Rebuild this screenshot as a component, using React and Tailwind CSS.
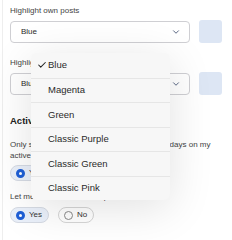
import { Check, ChevronDown } from 'lucide-react';

const options = ['Blue', 'Magenta', 'Green', 'Classic Purple', 'Classic Green', 'Classic Pink'];

const ColorSelect = ({ value }) => (
  <div className="flex items-center gap-[9px]">
    <div className="flex-1 h-[22px] flex items-center justify-between pl-[10px] pr-[8px] bg-white border border-[#cfcfd3] rounded-[4px]">
      <span className="text-[8px] text-[#2a2a2a]">{value}</span>
      <ChevronDown className="w-[10px] h-[10px] text-[#3b4a6b]" strokeWidth={2} />
    </div>
    <div className="w-[23px] h-[23px] rounded-[3px] bg-[#dde6f4]" />
  </div>
);

const Radio = ({ label, checked }) => (
  <div
    className={`flex items-center gap-[4px] h-[16px] pl-[5px] pr-[6px] rounded-full border ${
      checked ? 'bg-[#eaf0fa] border-[#d6dbe4]' : 'bg-white border-[#d6d6d6]'
    }`}
  >
    <span
      className={`w-[9px] h-[9px] rounded-full bg-white ${
        checked ? 'border-[3px] border-[#1f5fd6]' : 'border border-[#8a8a8a]'
      }`}
    />
    <span className="text-[8px] text-[#333]">{label}</span>
  </div>
);

export default function App() {
  return (
    <div
      className="relative w-[232px] h-[240px] overflow-hidden bg-white"
      style={{ fontFamily: '"Liberation Sans", Arial, sans-serif' }}
    >
      <div className="h-full ml-[2px] border-l border-[#eeeeee] pl-[7px] pr-[10px] pt-[5px]">
        <p className="text-[8px] text-[#444] leading-[11px]">Highlight own posts</p>
        <div className="mt-[4px]">
          <ColorSelect value="Blue" />
        </div>

        <p className="mt-[14px] text-[8px] text-[#444] leading-[11px]">Highlight others' posts</p>
        <div className="mt-[4px]">
          <ColorSelect value="Blue" />
        </div>

        <h3 className="mt-[20px] text-[9.5px] font-bold text-[#222] leading-[12px]">Activity</h3>
        <p className="mt-[12px] text-[8px] text-[#444] leading-[11px] whitespace-nowrap">
          Only show all posts from within the last thirty days on my
          <br />
          active topics list
        </p>
        <div className="mt-[4px] flex gap-[9px]">
          <Radio label="Yes" checked />
          <Radio label="No" />
        </div>

        <p className="mt-[10px] text-[8px] text-[#444] leading-[11px]">Let me know about new replies</p>
        <div className="mt-[5px] flex gap-[9px]">
          <Radio label="Yes" checked />
          <Radio label="No" />
        </div>
      </div>

      {/* open dropdown */}
      <div className="absolute left-[31px] top-[53px] w-[139px] bg-[#f7f7f7] rounded-[6px] shadow-[0_8px_45px_rgba(0,0,0,0.12)] overflow-hidden">
        {options.map((opt, idx) => (
          <div
            key={opt}
            className={`h-[24.5px] flex items-center pl-[6px] ${
              idx > 0 ? 'border-t border-[#e6e6e6]' : ''
            }`}
          >
            <span className="w-[11px] flex items-center">
              {idx === 0 && <Check className="w-[10px] h-[10px] text-[#222]" strokeWidth={2.5} />}
            </span>
            <span className="text-[9.5px] text-[#2a2a2a]">{opt}</span>
          </div>
        ))}
      </div>
    </div>
  );
}
